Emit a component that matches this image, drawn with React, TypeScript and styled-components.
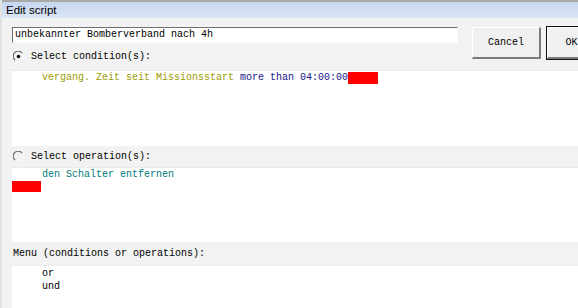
import styled, { createGlobalStyle } from 'styled-components'

const GlobalStyle = createGlobalStyle`
  html, body {
    margin: 0;
    padding: 0;
    background: #f0f0f0;
  }
`

const mono = `'Liberation Mono', 'Courier New', monospace`

const Window = styled.div`
  width: 578px;
  height: 308px;
  overflow: hidden;
  background: #f2f2f2;
  display: flex;
  flex-direction: column;
  border-left: 2px solid #e2e2e2;
  box-sizing: border-box;
`

const TitleBar = styled.div`
  height: 16px;
  flex-shrink: 0;
  border-top: 2px solid #a9a9a9;
  background: linear-gradient(to bottom, #c6d6ef, #dbe5f5);
  font-family: 'Liberation Sans', Arial, sans-serif;
  font-size: 11.5px;
  line-height: 16px;
  color: #000;
  padding-left: 4px;
`

const Header = styled.div`
  height: 52px;
  flex-shrink: 0;
  display: flex;
  padding-left: 10px;
  padding-top: 9px;
  box-sizing: border-box;
`

const HeaderLeft = styled.div`
  width: 446px;
  flex-shrink: 0;
  display: flex;
  flex-direction: column;
`

const NameInput = styled.div`
  height: 16px;
  box-sizing: border-box;
  background: #fff;
  border-top: 1px solid #6f6f6f;
  border-left: 1px solid #6f6f6f;
  border-right: 1px solid #fafafa;
  border-bottom: 1px solid #fafafa;
  font-family: ${mono};
  font-size: 10px;
  line-height: 14px;
  padding-left: 2px;
  color: #000;
  white-space: nowrap;
`

const Buttons = styled.div`
  display: flex;
  gap: 6px;
  margin-left: 14px;
  flex-shrink: 0;
`

const Button = styled.div<{ $default?: boolean }>`
  width: ${(p) => (p.$default ? '50px' : '69px')};
  height: 32px;
  box-sizing: border-box;
  display: flex;
  align-items: center;
  justify-content: center;
  background: #f0f0f0;
  font-family: ${mono};
  font-size: 10px;
  color: #000;
  border-top: 1px solid #fff;
  border-left: 1px solid #fff;
  border-right: 2px solid #7b7b7b;
  border-bottom: 2px solid #7b7b7b;
  outline: ${(p) => (p.$default ? '1px solid #111' : 'none')};
  flex-shrink: 0;
`

const LabelRow = styled.div<{ $height: number; $pad?: number }>`
  height: ${(p) => p.$height}px;
  flex-shrink: 0;
  display: flex;
  align-items: center;
  gap: 7px;
  padding-left: ${(p) => p.$pad ?? 11}px;
  font-family: ${mono};
  font-size: 10px;
  color: #000;
  white-space: nowrap;
`

const ListArea = styled.div<{ $height: number }>`
  height: ${(p) => p.$height}px;
  flex-shrink: 0;
  margin-left: 10px;
  background: #fff;
  font-family: ${mono};
  font-size: 10px;
  line-height: 13px;
  box-sizing: border-box;
  border-top: 1px solid #ebebeb;
`

const Line = styled.div`
  padding-left: 30px;
  white-space: nowrap;
  height: 13px;
  display: flex;
  align-items: center;
`

const Part = styled.span<{ $color: string }>`
  color: ${(p) => p.$color};
`

const Marker = styled.span<{ $block?: boolean }>`
  display: ${(p) => (p.$block ? 'block' : 'inline-block')};
  width: ${(p) => (p.$block ? 29 : 30)}px;
  height: ${(p) => (p.$block ? 11 : 12)}px;
  background: #ff0000;
`

const Radio = ({ checked }: { checked?: boolean }) => (
  <svg width="11" height="11" viewBox="0 0 11 11">
    <path d="M9.2 2.2 A5 5 0 1 0 2.2 9.2" fill="none" stroke="#6a6a6a" strokeWidth="1.2" />
    <path d="M9.2 2.2 A5 5 0 0 1 2.2 9.2" fill="none" stroke="#f6f6f6" strokeWidth="1.2" />
    {checked && <circle cx="5.5" cy="5.5" r="1.8" fill="#111" />}
  </svg>
)

export default function App() {
  return (
    <>
      <GlobalStyle />
      <Window>
        <TitleBar>Edit script</TitleBar>
        <Header>
          <HeaderLeft>
            <NameInput>unbekannter Bomberverband nach 4h</NameInput>
            <LabelRow $height={26} $pad={1}>
              <Radio checked />
              <span>Select condition(s):</span>
            </LabelRow>
          </HeaderLeft>
          <Buttons>
            <Button>Cancel</Button>
            <Button $default>OK</Button>
          </Buttons>
        </Header>
        <ListArea $height={76}>
          <Line>
            <Part $color="#9c9c00">vergang. Zeit seit Missionsstart&nbsp;</Part>
            <Part $color="#14148c">more than 04:00:00</Part>
            <Marker />
          </Line>
        </ListArea>
        <LabelRow $height={21}>
          <Radio />
          <span>Select operation(s):</span>
        </LabelRow>
        <ListArea $height={75}>
          <Line>
            <Part $color="#007a7a">den Schalter entfernen</Part>
          </Line>
          <Marker $block />
        </ListArea>
        <LabelRow $height={23} $pad={11}>
          <span>Menu (conditions or operations):</span>
        </LabelRow>
        <ListArea $height={43}>
          <Line style={{ marginTop: 1 }}>or</Line>
          <Line>und</Line>
        </ListArea>
      </Window>
    </>
  )
}
